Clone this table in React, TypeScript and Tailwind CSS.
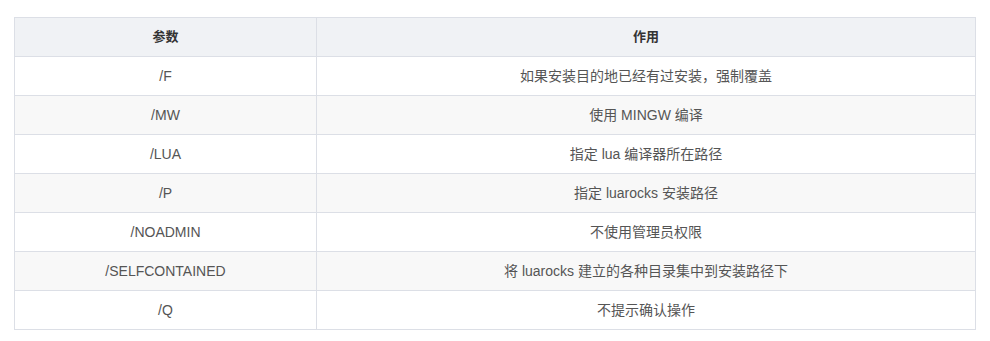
const rows: [string, string][] = [
  ["/F", "如果安装目的地已经有过安装，强制覆盖"],
  ["/MW", "使用 MINGW 编译"],
  ["/LUA", "指定 lua 编译器所在路径"],
  ["/P", "指定 luarocks 安装路径"],
  ["/NOADMIN", "不使用管理员权限"],
  ["/SELFCONTAINED", "将 luarocks 建立的各种目录集中到安装路径下"],
  ["/Q", "不提示确认操作"],
];

export default function App() {
  return (
    <div
      className="w-[990px] h-[341px] bg-white pt-[17px] pl-[14px]"
      style={{ fontFamily: '"Liberation Sans", "Noto Sans CJK SC", sans-serif' }}
    >
      <table className="w-[962px] border-collapse text-[14px] text-[#333]">
        <thead>
          <tr className="bg-[#f0f2f5] h-[39px]">
            <th className="w-[302px] border border-[#dcdfe6] font-semibold text-[13px]">参数</th>
            <th className="border border-[#dcdfe6] font-semibold text-[13px]">作用</th>
          </tr>
        </thead>
        <tbody>
          {rows.map(([k, v], i) => (
            <tr key={k} className={i % 2 === 1 ? "h-[39px] bg-[#f8f8f8]" : "h-[39px] bg-white"}>
              <td className="border border-[#dcdfe6] text-center text-[#555]">{k}</td>
              <td className="border border-[#dcdfe6] text-center text-[#555]">{v}</td>
            </tr>
          ))}
        </tbody>
      </table>
    </div>
  );
}
